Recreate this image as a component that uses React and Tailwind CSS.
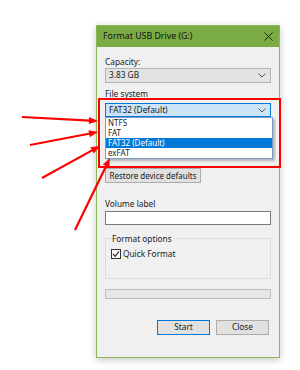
import React from "react";

function Chevron() {
  return (
    <svg width="8" height="5" viewBox="0 0 8 5" className="shrink-0">
      <path d="M0.5 0.5 L4 4 L7.5 0.5" fill="none" stroke="#555" strokeWidth="1" />
    </svg>
  );
}

function Arrow({ x1, y1, x2, y2 }) {
  const dx = x2 - x1;
  const dy = y2 - y1;
  const len = Math.sqrt(dx * dx + dy * dy);
  const ux = dx / len;
  const uy = dy / len;
  const hl = 9;
  const hw = 3.5;
  const bx = x2 - ux * hl;
  const by = y2 - uy * hl;
  const p1 = `${x2},${y2}`;
  const p2 = `${bx - uy * hw},${by + ux * hw}`;
  const p3 = `${bx + uy * hw},${by - ux * hw}`;
  return (
    <g>
      <line x1={x1} y1={y1} x2={bx + ux} y2={by + uy} stroke="#f00" strokeWidth="2.2" />
      <polygon points={`${p1} ${p2} ${p3}`} fill="#f00" />
    </g>
  );
}

export default function App() {
  return (
    <div
      className="relative w-[300px] h-[370px] bg-white overflow-hidden pt-[25px] pl-[96px] text-[8.3px] text-[#1a1a1a]"
      style={{ fontFamily: '"Noto Sans", "Liberation Sans", sans-serif' }}
    >
      <div className="w-[184px] h-[333px] border border-[#8cb85c] bg-[#f0f0f0] shadow-[0_2px_8px_rgba(0,0,0,0.22)] flex flex-col">
        <div className="h-[21px] bg-[#7aab44] flex items-center justify-between pl-[6px] pr-[6px]">
          <span className="text-[8.8px] text-[#111]">Format USB Drive (G:)</span>
          <svg width="9" height="9" viewBox="0 0 9 9">
            <path d="M0.5 0.5 L8.5 8.5 M8.5 0.5 L0.5 8.5" stroke="#1c2a10" strokeWidth="1" />
          </svg>
        </div>
        <div className="flex flex-col px-[8px]">
          <div className="mt-[9px] h-[11px] leading-[11px]">Capacity:</div>
          <div className="mt-[1px] h-[15px] border border-[#b4b4b4] bg-[#e3e3e3] flex items-center justify-between pl-[3px] pr-[4px]">
            <span>3.83 GB</span>
            <Chevron />
          </div>
          <div className="mt-[5px] h-[11px] leading-[11px]">File system</div>
          <div className="mt-[4px] h-[14px] border border-[#0078d7] bg-[#cce4f7] flex items-center justify-between pl-[3px] pr-[4px]">
            <span>FAT32 (Default)</span>
            <Chevron />
          </div>
          <div className="h-[51px]" />
          <div className="w-[96px] h-[15px] border border-[#adadad] bg-[#e1e1e1] flex items-center justify-center whitespace-nowrap text-[8px]">
            Restore device defaults
          </div>
          <div className="mt-[15px] h-[11px] leading-[11px]">Volume label</div>
          <div className="mt-[2px] h-[14px] border border-[#7a7a7a] bg-white" />
          <div className="relative mt-[13px] h-[41px] border border-[#dcdcdc]">
            <span className="absolute -top-[6px] left-[5px] bg-[#f0f0f0] px-[1px] leading-[11px]">Format options</span>
            <div className="flex items-center mt-[9px] ml-[5px]">
              <div className="w-[10px] h-[10px] border border-[#333] bg-white flex items-center justify-center">
                <svg width="8" height="8" viewBox="0 0 8 8">
                  <path d="M1 4 L3.2 6.3 L7 1.3" fill="none" stroke="#222" strokeWidth="1.1" />
                </svg>
              </div>
              <span className="ml-[2px]">Quick Format</span>
            </div>
          </div>
          <div className="mt-[10px] h-[10px] border border-[#bcbcbc] bg-[#e6e6e6]" />
          <div className="mt-[21px] flex justify-end gap-[6px] pr-[2px]">
            <div className="w-[53px] h-[15px] border border-[#0078d7] bg-[#e1e1e1] flex items-center justify-center">Start</div>
            <div className="w-[53px] h-[15px] border border-[#adadad] bg-[#e1e1e1] flex items-center justify-center">Close</div>
          </div>
        </div>
      </div>

      {/* dropdown list */}
      <div className="absolute left-[105px] top-[117px] w-[168px] border border-[#7a9cc6] bg-white shadow-[2px_2px_2px_rgba(0,0,0,0.25)] flex flex-col text-[8px]">
        <div className="h-[10px] leading-[10px] pl-[2px]">NTFS</div>
        <div className="h-[10px] leading-[10px] pl-[2px]">FAT</div>
        <div className="h-[10px] leading-[10px] pl-[2px] bg-[#0078d7] text-white">FAT32 (Default)</div>
        <div className="h-[10px] leading-[10px] pl-[2px]">exFAT</div>
      </div>

      {/* red annotation box */}
      <div className="absolute left-[98px] top-[98px] w-[183px] h-[70px] border-2 border-[#ff0000]" />

      <svg className="absolute left-0 top-0" width="300" height="370">
        <Arrow x1={22} y1={117} x2={98} y2={121} />
        <Arrow x1={30} y1={145} x2={98} y2={132} />
        <Arrow x1={42} y1={178} x2={100} y2={146} />
        <Arrow x1={75} y1={230} x2={110} y2={158} />
      </svg>
    </div>
  );
}
